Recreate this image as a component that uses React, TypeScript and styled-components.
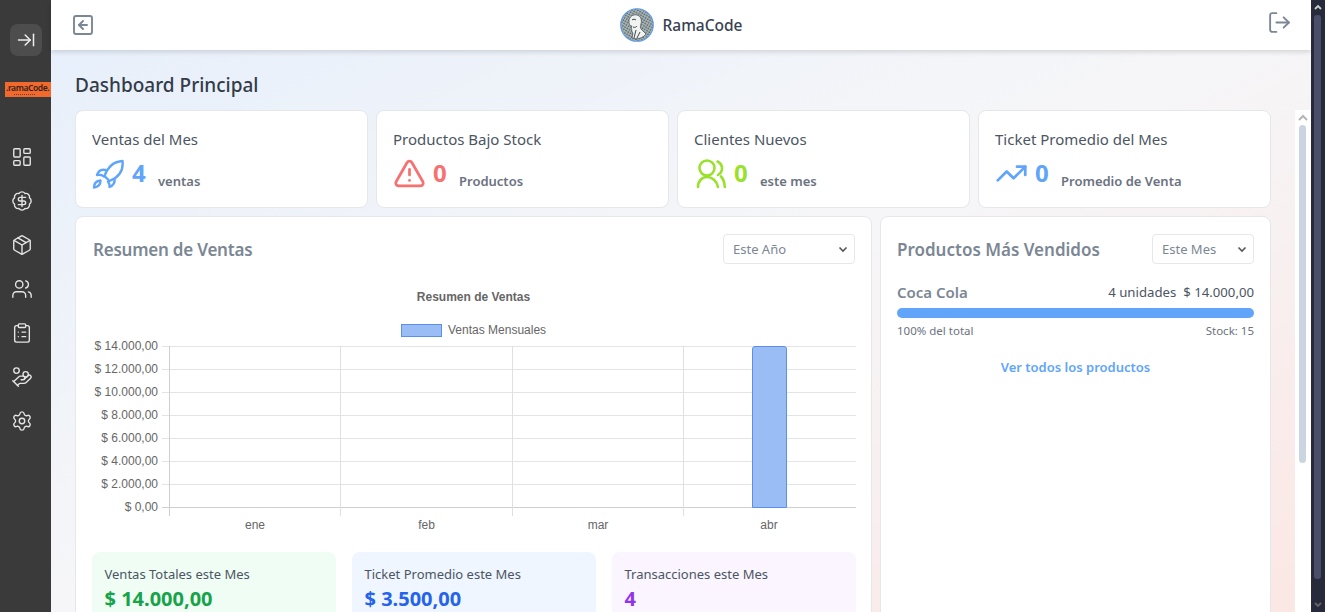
import React from "react";
import styled, { createGlobalStyle } from "styled-components";
import {
  ArrowRightToLine, LayoutDashboard, BadgeDollarSign, Package, Users, ClipboardList, HandCoins, Settings,
  SquareArrowLeft, LogOut, TriangleAlert, TrendingUp,
} from "lucide-react";

const Global = createGlobalStyle`
  html, body { margin: 0; padding: 0; height: 100%; overflow: hidden; }
  body { font-family: "Noto Sans", "Liberation Sans", sans-serif; }
  * { box-sizing: border-box; }
`;

const Page = styled.div`
  display: flex; width: 1325px; height: 612px; overflow: hidden; background: #fff;
`;
const Sidebar = styled.aside`
  width: 51px; flex: none; background: #3a3a3a; display: flex; flex-direction: column; align-items: center; color: #e5e5e5;
`;
const Toggle = styled.div`
  width: 32px; height: 32px; margin: 24px 0 0 1px; border-radius: 8px; background: #4d4d4d; display: flex; align-items: center; justify-content: center; color: #eee;
`;
const Logo = styled.div`
  align-self: flex-end; width: 46px; height: 15px; margin-top: 26px; background: #f2692e; color: #33231a; position: relative;
  font-size: 8.5px; font-weight: 600; line-height: 12px; white-space: nowrap; overflow: hidden; letter-spacing: -0.4px; padding-left: 1px;
  &::after { content: ""; position: absolute; left: 9px; width: 21px; bottom: 2px; border-bottom: 1px dotted #7a3a1c; }
`;
const Nav = styled.nav`
  align-self: flex-start; margin: 49px 0 0 11px; display: flex; flex-direction: column; gap: 22px; align-items: center;
`;
const Main = styled.div`
  flex: 1; min-width: 0; display: flex; flex-direction: column; position: relative;
  background: linear-gradient(to bottom right, #e6effb 0%, #f6f6f8 50%, #fbe7e4 100%);
`;
const Header = styled.header`
  height: 50px; flex: none; background: #fff; box-shadow: 0 2px 5px rgba(0,0,0,.14); display: flex; align-items: center; justify-content: space-between; padding: 0 19px 0 20px; position: relative; color: #7b8794;
`;
const ExitIcon = styled.span`
  display: flex; margin-bottom: 6px;
`;
const Brand = styled.div`
  display: flex; align-items: center; gap: 8px; font-size: 15.5px; font-weight: 500; color: #374151; margin-left: 1px;
`;
const TitleBar = styled.h1`
  flex: none; height: 60px; margin: 0; padding: 23px 0 0 24px; font-size: 19px; line-height: 24px; font-weight: 500; color: #333b47;
`;
const Body = styled.div`
  flex: 1; min-height: 0; display: flex; justify-content: space-between; padding-left: 24px;
`;
const Content = styled.div`
  width: 1196px; display: flex; flex-direction: column; gap: 8px;
`;
const KpiRow = styled.div`
  display: grid; grid-template-columns: repeat(4, 293px); gap: 8px;
`;
const Card = styled.section`
  background: #fff; border: 1px solid #e5e7eb; border-radius: 8px;
`;
const Kpi = styled(Card)`
  height: 98px; padding: 18px 16px 0;
`;
const KpiTitle = styled.div`
  font-size: 15px; line-height: 21px; color: #4b5563;
`;
const KpiLine = styled.div`
  display: flex; align-items: center; margin-top: 6px; height: 34px;
`;
const KpiIcon = styled.span<{ $c: string }>`
  color: ${(p) => p.$c}; display: flex; width: 33px;
`;
const KpiValue = styled.span<{ $c: string }>`
  color: ${(p) => p.$c}; font-size: 24px; font-weight: 700; margin-left: 7px; width: 26px; line-height: 32px;
`;
const KpiUnit = styled.span`
  font-size: 13px; font-weight: 600; color: #6b7280; padding-top: 16px;
`;
const Split = styled.div`
  display: grid; grid-template-columns: 797px 391px; gap: 8px; flex: 1;
`;
const Panel = styled(Card)`
  padding: 16px; height: 480px;
`;
const PanelHead = styled.div`
  display: flex; justify-content: space-between; align-items: center; height: 32px;
`;
const PanelTitle = styled.h2<{ $tight?: boolean }>`
  margin: 0; font-size: 17px; font-weight: 600; color: #7b8794;
  ${(p) => (p.$tight ? "letter-spacing: -0.22px; padding-left: 1px;" : "")}
`;
const Select = styled.div<{ $w: number }>`
  width: ${(p) => p.$w}px; height: 30px; margin-bottom: 1px; border: 1px solid #e5e7eb; border-radius: 4px; background: #fff; display: flex; align-items: center; justify-content: space-between; padding: 0 5px 0 9px; font-size: 13px; color: #7b8794;
`;
const ChartBox = styled.div`
  height: 260px; margin-top: 15px;
  svg { display: block; }
`;
const Stats = styled.div`
  display: grid; grid-template-columns: repeat(3, 244px); gap: 16px; margin-top: 12px;
`;
const Stat = styled.div<{ $bg: string }>`
  background: ${(p) => p.$bg}; border-radius: 8px; padding: 13px 12.5px; height: 90px;
`;
const StatLabel = styled.div`
  font-size: 13px; line-height: 18px; color: #4b5563;
`;
const StatValue = styled.div<{ $c: string }>`
  font-size: 20px; line-height: 27px; font-weight: 700; color: ${(p) => p.$c}; margin-top: 2px;
`;
const Product = styled.div`
  margin-top: 17px;
`;
const ProductTop = styled.div`
  display: flex; justify-content: space-between; align-items: center; height: 20px; font-size: 13.2px; color: #4b5563;
`;
const ProductName = styled.span`
  font-size: 15px; font-weight: 600; color: #7b8794;
`;
const Bar = styled.div`
  height: 10px; border-radius: 5px; background: #60a5fa; margin-top: 6px;
`;
const ProductFoot = styled.div`
  display: flex; justify-content: space-between; font-size: 11.5px; line-height: 16px; color: #6b7280; margin-top: 5px;
`;
const SeeAll = styled.div`
  text-align: center; font-size: 13px; font-weight: 600; color: #60a5fa; margin-top: 19px;
`;
const InnerScroll = styled.div`
  width: 16px; background: #fff; position: relative; flex: none;
`;
const InnerThumb = styled.div`
  position: absolute; left: 4px; top: 15px; width: 7px; height: 338px; border-radius: 4px; background: #cbd5e1;
`;
const InnerArrow = styled.svg`
  position: absolute; left: 3px; top: 4px;
`;
const OuterScroll = styled.div`
  width: 14px; flex: none; background: #272a3a; position: relative;
`;
const OuterThumb = styled.div`
  position: absolute; left: 3px; top: 15px; width: 7px; height: 564px; border-radius: 3px; background: #4a4e69;
`;
const OuterArrow = styled.svg<{ $bottom?: boolean }>`
  position: absolute; left: 3px; ${(p) => (p.$bottom ? "bottom: 4px;" : "top: 4px;")}
`;

const Avatar = () => (
  <svg width="34" height="34" viewBox="0 0 34 34">
    <defs>
      <pattern id="eng" width="2.6" height="2.6" patternUnits="userSpaceOnUse" patternTransform="rotate(30)">
        <rect width="2.6" height="2.6" fill="#a9b4b6" />
        <circle cx="1" cy="1" r="0.75" fill="#4a5557" />
      </pattern>
    </defs>
    <circle cx="17" cy="17" r="16.3" fill="url(#eng)" stroke="#5b9df0" strokeWidth="1.1" />
    <path d="M9 13c0-4 4-7 8-6 4 1 5 5 4 9-.5 2-1 3 0 5l5 5c-3 4-9 6-14 4l1-5c-1-1-2-3-1-4-1-1-1-1 0-3-2 0-3-1-3-5z" fill="#f1f3f1" stroke="#39474a" strokeWidth="0.7" />
    <path d="M12 12c1-1 3-1 4 0M13 19c2 1 3 0 4-1M16 22l-2 8M20 24l-3 6" stroke="#2d3638" strokeWidth="0.9" fill="none" />
  </svg>
);

const RocketIcon = () => (
  <svg width="33" height="34" viewBox="4 0 33 34" fill="none" stroke="currentColor" strokeWidth="2.4" strokeLinecap="round" strokeLinejoin="round">
    <path d="M34.500 5c-8 .5-14 4-18 15l5 5c10-4 14-11 13-20z" />
    <path d="M17.500 14c-4-1-7 .5-8.500 5 2.500-.5 5 0 7 1.500" />
    <path d="M26.500 23c.5 3.500-1 6.500-5 8 .5-2-.5-4-1.500-5.500" />
    <path d="M6 31.500c0-4 2.500-6.500 6.500-7 0 4-2.500 6.500-6.500 7z" />
  </svg>
);

const PeopleIcon = () => (
  <svg width="33" height="34" viewBox="4 0 33 34" fill="none" stroke="currentColor" strokeWidth="2.6" strokeLinecap="round">
    <circle cx="17" cy="12" r="7.500" />
    <path d="M8 31c0-6 4-10 9-10s10 4 11 10" />
    <path d="M27.500 5.500c3 1.500 4.500 4 4.500 7 0 2.500-1.500 5-4 6.500" />
    <path d="M31 20.500c2.500 2.500 3.500 6 3.800 10.500" />
  </svg>
);

const Chart = () => {
  const hl = [346, 369, 392, 415, 438, 461, 484];
  const labels = ["$ 14.000,00", "$ 12.000,00", "$ 10.000,00", "$ 8.000,00", "$ 6.000,00", "$ 4.000,00", "$ 2.000,00", "$ 0,00"];
  const vl = [169, 340, 512, 683];
  const months = [["ene", 255], ["feb", 426.5], ["mar", 598], ["abr", 769]] as const;
  const t = { fontFamily: '"Liberation Sans", sans-serif', fontSize: 12, fill: "#666" };
  return (
    <svg width="764" height="260" viewBox="92 280 764 260">
      <text x="473.5" y="301" textAnchor="middle" {...t} fontWeight="700">Resumen de Ventas</text>
      <rect x="401.5" y="324.5" width="40" height="12" fill="#9bbdf6" stroke="#5a90e8" />
      <text x="448" y="334" {...t}>Ventas Mensuales</text>
      {hl.map((y) => <line key={y} x1="162" x2="856" y1={y + 0.5} y2={y + 0.5} stroke="#e4e4e4" />)}
      <line x1="162" x2="856" y1="507.5" y2="507.5" stroke="#cfcfcf" />
      {vl.map((x, i) => <line key={x} x1={x + 0.5} x2={x + 0.5} y1="346" y2="516" stroke={i === 0 ? "#cfcfcf" : "#e0e0e0"} />)}
      <path d="M752.5 507.5V349a2.500 2.500 0 0 1 2.500-2.500h29a2.500 2.500 0 0 1 2.500 2.500v158.5z" fill="#9bbdf6" stroke="#5a90e8" />
      {labels.map((l, i) => <text key={l} x="158" y={350 + i * 23} textAnchor="end" {...t}>{l}</text>)}
      {months.map(([m, x]) => <text key={m} x={x} y="529" textAnchor="middle" {...t}>{m}</text>)}
    </svg>
  );
};

const Chevron = () => (
  <svg width="12" height="12" viewBox="0 0 12 12"><path d="M2.500 4.500L6 8l3.500-3.500" fill="none" stroke="#555" strokeWidth="1.6" /></svg>
);

const kpis = [
  { t: "Ventas del Mes", v: "4", u: "ventas", c: "#60a5fa", i: <RocketIcon /> },
  { t: "Productos Bajo Stock", v: "0", u: "Productos", c: "#f87171", i: <TriangleAlert size={33} strokeWidth={2} /> },
  { t: "Clientes Nuevos", v: "0", u: "este mes", c: "#9ae12c", i: <PeopleIcon /> },
  { t: "Ticket Promedio del Mes", v: "0", u: "Promedio de Venta", c: "#60a5fa", i: <TrendingUp size={33} strokeWidth={2} /> },
];

export default function App() {
  return (
    <Page>
      <Global />
      <Sidebar>
        <Toggle><ArrowRightToLine size={20} strokeWidth={1.8} /></Toggle>
        <Logo>.ramaCode.</Logo>
        <Nav>
          <LayoutDashboard size={22} strokeWidth={1.5} />
          <BadgeDollarSign size={22} strokeWidth={1.5} />
          <Package size={22} strokeWidth={1.5} />
          <Users size={22} strokeWidth={1.5} />
          <ClipboardList size={22} strokeWidth={1.5} />
          <HandCoins size={22} strokeWidth={1.5} />
          <Settings size={22} strokeWidth={1.5} />
        </Nav>
      </Sidebar>
      <Main>
        <Header>
          <SquareArrowLeft size={24} strokeWidth={1.9} />
          <Brand><Avatar />RamaCode</Brand>
          <ExitIcon><LogOut size={25} strokeWidth={1.8} /></ExitIcon>
        </Header>
        <TitleBar>Dashboard Principal</TitleBar>
        <Body>
          <Content>
            <KpiRow>
              {kpis.map((k) => (
                <Kpi key={k.t}>
                  <KpiTitle>{k.t}</KpiTitle>
                  <KpiLine>
                    <KpiIcon $c={k.c}>{k.i}</KpiIcon>
                    <KpiValue $c={k.c}>{k.v}</KpiValue>
                    <KpiUnit>{k.u}</KpiUnit>
                  </KpiLine>
                </Kpi>
              ))}
            </KpiRow>
            <Split>
              <Panel>
                <PanelHead>
                  <PanelTitle $tight>Resumen de Ventas</PanelTitle>
                  <Select $w={132}>Este Año<Chevron /></Select>
                </PanelHead>
                <ChartBox><Chart /></ChartBox>
                <Stats>
                  <Stat $bg="#f0fdf4"><StatLabel>Ventas Totales este Mes</StatLabel><StatValue $c="#16a34a">$ 14.000,00</StatValue></Stat>
                  <Stat $bg="#eff6ff"><StatLabel>Ticket Promedio este Mes</StatLabel><StatValue $c="#2563eb">$ 3.500,00</StatValue></Stat>
                  <Stat $bg="#faf5ff"><StatLabel>Transacciones este Mes</StatLabel><StatValue $c="#9333ea">4</StatValue></Stat>
                </Stats>
              </Panel>
              <Panel>
                <PanelHead>
                  <PanelTitle>Productos Más Vendidos</PanelTitle>
                  <Select $w={102}>Este Mes<Chevron /></Select>
                </PanelHead>
                <Product>
                  <ProductTop>
                    <ProductName>Coca Cola</ProductName>
                    <span>4 unidades &nbsp;$ 14.000,00</span>
                  </ProductTop>
                  <Bar />
                  <ProductFoot><span>100% del total</span><span>Stock: 15</span></ProductFoot>
                </Product>
                <SeeAll>Ver todos los productos</SeeAll>
              </Panel>
            </Split>
          </Content>
          <InnerScroll>
            <InnerArrow width="10" height="7" viewBox="0 0 10 7"><path d="M1 6l4-4 4 4" fill="none" stroke="#b5b5b5" strokeWidth="2" /></InnerArrow>
            <InnerThumb />
          </InnerScroll>
        </Body>
      </Main>
      <OuterScroll>
        <OuterArrow width="8" height="6" viewBox="0 0 8 6"><path d="M1 5l3-3 3 3" fill="none" stroke="#ccc" strokeWidth="1.8" /></OuterArrow>
        <OuterThumb />
        <OuterArrow $bottom width="8" height="6" viewBox="0 0 8 6"><path d="M1 1l3 3 3-3" fill="none" stroke="#666" strokeWidth="1.8" /></OuterArrow>
      </OuterScroll>
    </Page>
  );
}
